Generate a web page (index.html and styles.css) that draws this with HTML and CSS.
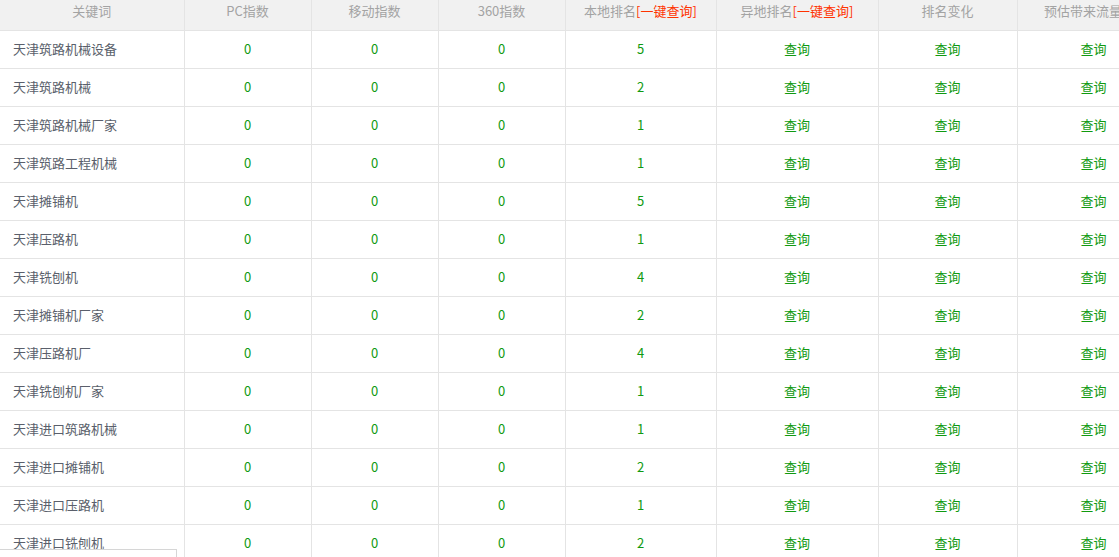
FILE: index.html
```html
<!DOCTYPE html>
<html lang="zh-CN">
<head>
<meta charset="utf-8">
<title>关键词排名</title>
<link rel="stylesheet" href="styles.css">
</head>
<body>
<div class="wrap">
<table class="kw">
<colgroup>
<col class="c1"><col class="c2"><col class="c3"><col class="c4"><col class="c5"><col class="c6"><col class="c7"><col class="c8">
</colgroup>
<thead>
<tr>
<th>关键词</th><th>PC指数</th><th>移动指数</th><th>360指数</th>
<th>本地排名<span class="red">[一键查询]</span></th>
<th>异地排名<span class="red">[一键查询]</span></th>
<th>排名变化</th><th>预估带来流量(IP)</th>
</tr>
</thead>
<tbody>
<tr><td class="k">天津筑路机械设备</td><td>0</td><td>0</td><td>0</td><td>5</td><td>查询</td><td>查询</td><td>查询</td></tr>
<tr><td class="k">天津筑路机械</td><td>0</td><td>0</td><td>0</td><td>2</td><td>查询</td><td>查询</td><td>查询</td></tr>
<tr><td class="k">天津筑路机械厂家</td><td>0</td><td>0</td><td>0</td><td>1</td><td>查询</td><td>查询</td><td>查询</td></tr>
<tr><td class="k">天津筑路工程机械</td><td>0</td><td>0</td><td>0</td><td>1</td><td>查询</td><td>查询</td><td>查询</td></tr>
<tr><td class="k">天津摊铺机</td><td>0</td><td>0</td><td>0</td><td>5</td><td>查询</td><td>查询</td><td>查询</td></tr>
<tr><td class="k">天津压路机</td><td>0</td><td>0</td><td>0</td><td>1</td><td>查询</td><td>查询</td><td>查询</td></tr>
<tr><td class="k">天津铣刨机</td><td>0</td><td>0</td><td>0</td><td>4</td><td>查询</td><td>查询</td><td>查询</td></tr>
<tr><td class="k">天津摊铺机厂家</td><td>0</td><td>0</td><td>0</td><td>2</td><td>查询</td><td>查询</td><td>查询</td></tr>
<tr><td class="k">天津压路机厂</td><td>0</td><td>0</td><td>0</td><td>4</td><td>查询</td><td>查询</td><td>查询</td></tr>
<tr><td class="k">天津铣刨机厂家</td><td>0</td><td>0</td><td>0</td><td>1</td><td>查询</td><td>查询</td><td>查询</td></tr>
<tr><td class="k">天津进口筑路机械</td><td>0</td><td>0</td><td>0</td><td>1</td><td>查询</td><td>查询</td><td>查询</td></tr>
<tr><td class="k">天津进口摊铺机</td><td>0</td><td>0</td><td>0</td><td>2</td><td>查询</td><td>查询</td><td>查询</td></tr>
<tr><td class="k">天津进口压路机</td><td>0</td><td>0</td><td>0</td><td>1</td><td>查询</td><td>查询</td><td>查询</td></tr>
<tr><td class="k">天津进口铣刨机</td><td>0</td><td>0</td><td>0</td><td>2</td><td>查询</td><td>查询</td><td>查询</td></tr>
</tbody>
</table>
</div>
<div class="float-box">本站提供 &nbsp; &nbsp; 的数据源</div>
</body>
</html>
```
FILE: styles.css
```css
html, body {
  margin: 0;
  padding: 0;
  background: #fff;
  overflow: hidden;
}
body {
  font-family: "Noto Sans CJK SC", "Microsoft YaHei", sans-serif;
  font-size: 13px;
}
.wrap {
  width: 1119px;
  height: 557px;
  overflow: hidden;
}
.kw {
  border-collapse: collapse;
  table-layout: fixed;
  width: 1170px;
}
.c1 { width: 184px; }
.c2 { width: 127px; }
.c3 { width: 127px; }
.c4 { width: 127px; }
.c5 { width: 151px; }
.c6 { width: 162px; }
.c7 { width: 139px; }
.c8 { width: 153px; }
.kw th {
  height: 30px;
  padding: 0;
  background: #f1f1f1;
  color: #a3a3a3;
  font-weight: normal;
  text-align: center;
  white-space: nowrap;
  overflow: hidden;
  border-right: 1px solid #e4e4e4;
  border-bottom: 1px solid #e4e4e4;
  line-height: 22px;
  vertical-align: top;
}
.kw th .red { color: #ff3300; }
.kw td {
  height: 35px;
  padding: 0 0 2px 0;
  color: #109a10;
  text-align: center;
  border-right: 1px solid #e4e4e4;
  border-bottom: 1px solid #e4e4e4;
  white-space: nowrap;
}
.kw td.k {
  text-align: left;
  padding-left: 13px;
  color: #5a5f6b;
}
.float-box {
  position: fixed;
  left: 0;
  top: 549px;
  width: 177px;
  height: 30px;
  background: #fff;
  border-top: 1px solid #d6d6d6;
  border-right: 1px solid #d6d6d6;
  color: #555;
  padding: 3px 0 0 32px;
  box-sizing: border-box;
  white-space: nowrap;
  overflow: hidden;
}
```
